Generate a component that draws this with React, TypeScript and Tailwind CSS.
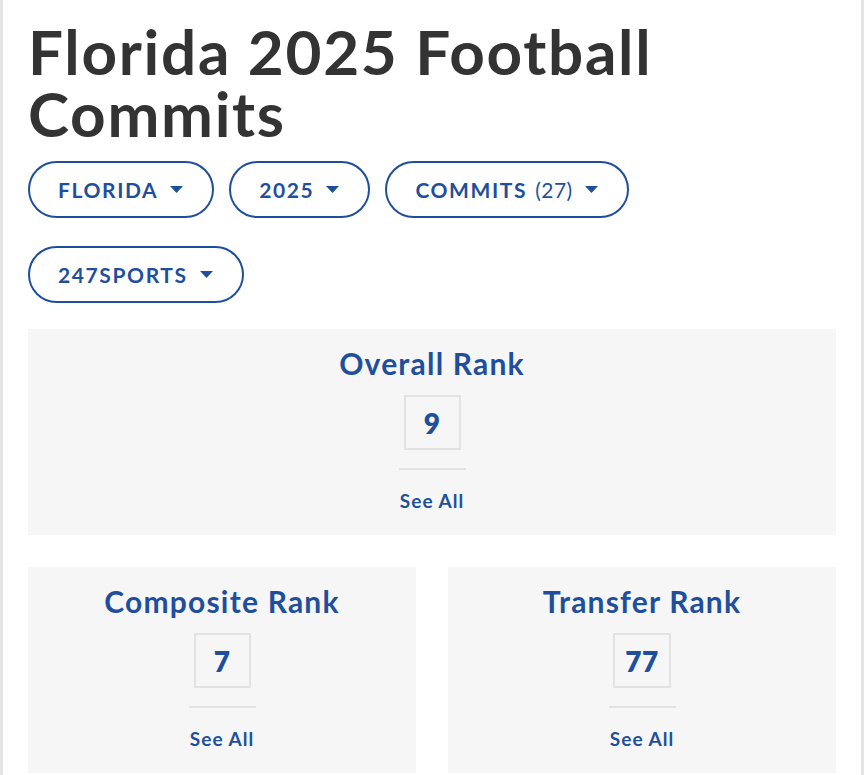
const FILTERS = [
  { label: 'FLORIDA' },
  { label: '2025' },
  { label: 'COMMITS', count: '(27)' },
  { label: '247SPORTS' },
];

function Caret() {
  return (
    <svg width="13" height="7" viewBox="0 0 13 7" className="ml-[12px] shrink-0">
      <path d="M0 0h13L6.5 7z" fill="currentColor" />
    </svg>
  );
}

function RankCard({ title, value }: { title: string; value: string }) {
  return (
    <div className="flex flex-col items-center bg-[#f6f6f6] pt-[16px] pb-[22px]">
      <h2 className="text-[30px] font-bold leading-[37px] tracking-[1.2px] text-[#1f4f9c]">{title}</h2>
      <div className="mt-[13px] flex h-[55px] min-w-[57px] items-center justify-center border-2 border-[#e2e2e2] px-[10px] text-[28px] font-extrabold tracking-[0.5px] text-[#1f4f9c]">
        {value}
      </div>
      <div className="mt-[18px] h-[2px] w-[67px] bg-[#e2e2e2]" />
      <a className="mt-[19px] text-[19px] font-bold leading-[24px] tracking-[1px] text-[#1f4f9c]">See All</a>
    </div>
  );
}

export default function App() {
  return (
    <div className="min-h-[775px] border-x-[3px] border-[#e4e4e4] bg-white px-[25px] pt-[20px] font-['Lato',sans-serif]">
      <h1 className="text-[62px] font-bold leading-[62px] tracking-[1.7px] text-[#333333]">
        Florida 2025 Football Commits
      </h1>
      <div className="mt-[17px] flex flex-wrap gap-x-[15px] gap-y-[28px] pr-[200px]">
        {FILTERS.map(f => (
          <button
            key={f.label}
            className="flex h-[57px] items-center rounded-full border-2 border-[#1f4f9c] pl-[28px] pr-[29px] text-[21px] font-bold tracking-[1.6px] text-[#1f4f9c]"
          >
            {f.label}
            {f.count && <span className="ml-[8px] font-normal tracking-[0.5px]">{f.count}</span>}
            <Caret />
          </button>
        ))}
      </div>
      <div className="mt-[26px] flex flex-col gap-[32px]">
        <RankCard title="Overall Rank" value="9" />
        <div className="grid grid-cols-2 gap-[32px]">
          <RankCard title="Composite Rank" value="7" />
          <RankCard title="Transfer Rank" value="77" />
        </div>
      </div>
    </div>
  );
}
